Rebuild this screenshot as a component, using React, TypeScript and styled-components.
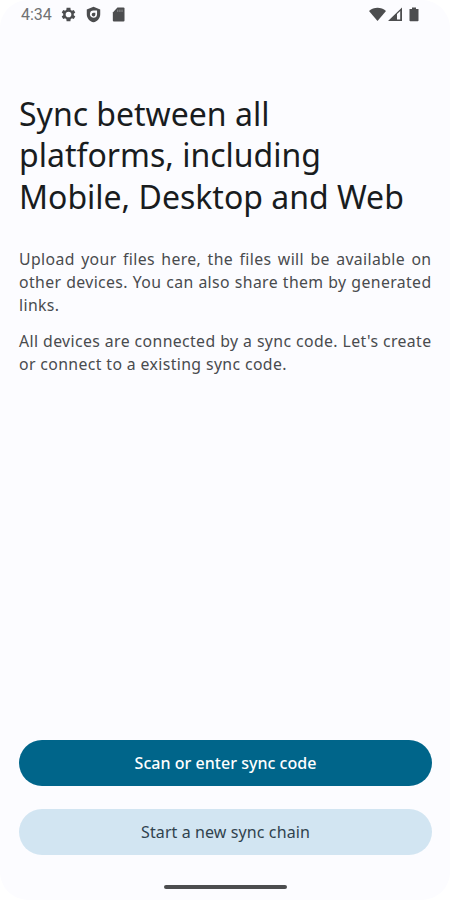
import React from "react";
import styled, { createGlobalStyle } from "styled-components";

const colors = {
  background: "#fcfcff",
  text: "#191c1e",
  primary: "#00658a",
  onPrimary: "#ffffff",
  secondary: "#d2e5f2",
  onSecondary: "#30424e",
  system: "#4c4d4f",
};

interface ActionButtonProps {
  $primary?: boolean;
}

const StatusIcons = () => (
  <IconGroup>
    <svg width="17" height="17" viewBox="0 0 24 24" fill={colors.system}>
      <path
        fillRule="evenodd"
        d="M19.4 13a7.500 7.500 0 0 0 0-2l2.200-1.700-2.200-3.800-2.600 1.100a7.500 7.500 0 0 0-1.700-1L14.700 2.500H9.300l-.4 3.100a7.500 7.500 0 0 0-1.700 1L4.600 5.500 2.400 9.300 4.600 11a7.500 7.500 0 0 0 0 2l-2.200 1.700 2.200 3.800 2.600-1.100a7.500 7.500 0 0 0 1.700 1l.4 3.100h5.400l.4-3.100a7.500 7.500 0 0 0 1.700-1l2.600 1.100 2.200-3.800zM12 16a4 4 0 1 1 0-8 4 4 0 0 1 0 8z"
      />
    </svg>
    <svg width="17" height="17" viewBox="0 0 24 24" fill={colors.system}>
      <path
        fillRule="evenodd"
        d="M12 1 2.500 5v6.500c0 5.400 4 10.200 9.500 11.500 5.500-1.300 9.500-6.100 9.500-11.500V5zM12 6.500h5V12a5 5 0 1 1-5-5.500z"
      />
      <path d="M12 9.500h2.600v2.800a2.600 2.600 0 1 1-2.600-2.800z" />
    </svg>
    <svg width="17" height="17" viewBox="0 0 24 24" fill={colors.system}>
      <path d="M10.500 2H19a1.500 1.500 0 0 1 1.500 1.500v17A1.500 1.500 0 0 1 19 22H5.500A1.500 1.500 0 0 1 4 20.500V9z" />
      <path d="M11 5v3.500M14 5v3.500M17 5v3.500" stroke="#8b8c8e" strokeWidth="1.400" />
    </svg>
  </IconGroup>
);

const SignalIcons = () => (
  <svg width="52" height="16" viewBox="0 0 52 16" fill={colors.system}>
    <path d="M0 4C5-.2 12-.2 17 4L8.500 14z" />
    <path d="M33 .5V14H19zM28 7v5.500h3.200V3.900z" fillRule="evenodd" />
    <path d="M43 .5h4V2h2.500v11.500a.8.8 0 0 1-.8.8h-7.400a.8.8 0 0 1-.8-.8V2H43z" />
  </svg>
);

const App = () => {
  return (
    <>
      <GlobalStyle />
      <Screen>
        <StatusBar>
          <StatusGroup>
            <Clock>4:34</Clock>
            <StatusIcons />
          </StatusGroup>
          <SignalIcons />
        </StatusBar>
        <Content>
          <Title>Sync between all platforms, including Mobile, Desktop and Web</Title>
          <Description>
            <Paragraph>
              Upload your files here, the files will be available on other
              devices. You can also share them by generated links.
            </Paragraph>
            <Paragraph>
              All devices are connected by a sync code. Let's create or connect
              to a existing sync code.
            </Paragraph>
          </Description>
        </Content>
        <Actions>
          <ActionButton $primary>Scan or enter sync code</ActionButton>
          <ActionButton>Start a new sync chain</ActionButton>
        </Actions>
        <HomeIndicator />
      </Screen>
    </>
  );
};

const GlobalStyle = createGlobalStyle`
  * {
    box-sizing: border-box;
  }

  body {
    margin: 0;
    background: #ffffff;
    font-family: "Noto Sans", sans-serif;
  }
`;

const Screen = styled.main`
  display: flex;
  flex-direction: column;
  width: 450px;
  height: 900px;
  overflow: hidden;
  border-radius: 28px;
  background: ${colors.background};
`;

const StatusBar = styled.header`
  display: flex;
  justify-content: space-between;
  align-items: center;
  height: 30px;
  padding: 0 29px 0 21px;
`;

const StatusGroup = styled.div`
  display: flex;
  align-items: center;
  gap: 8px;
`;

const Clock = styled.span`
  font-family: Roboto, sans-serif;
  font-size: 16px;
  line-height: 18px;
  color: #707173;
`;

const IconGroup = styled.div`
  display: flex;
  gap: 8.300px;
  margin-bottom: 1px;
`;

const Content = styled.section`
  flex: 1;
  padding: 63px 18.500px 0 19px;
`;

const Title = styled.h1`
  margin: 0;
  font-size: 32px;
  font-weight: 400;
  line-height: 41.300px;
  color: ${colors.text};
`;

const Description = styled.div`
  display: flex;
  flex-direction: column;
  gap: 13.500px;
  margin-top: 31px;
`;

const Paragraph = styled.p`
  margin: 0;
  font-size: 15.800px;
  line-height: 23px;
  letter-spacing: 0.380px;
  text-align: justify;
  color: #494b4e;
`;

const Actions = styled.div`
  display: flex;
  flex-direction: column;
  gap: 23.500px;
  padding: 0 18px 0 19px;
`;

const ActionButton = styled.button<ActionButtonProps>`
  height: 45.500px;
  padding: 0;
  border: 0;
  border-radius: 23px;
  font-family: inherit;
  font-size: 16px;
  font-weight: ${(props) => (props.$primary ? 500 : 400)};
  letter-spacing: ${(props) => (props.$primary ? "0.030px" : "0.100px")};
  background: ${(props) => (props.$primary ? colors.primary : colors.secondary)};
  color: ${(props) => (props.$primary ? colors.onPrimary : colors.onSecondary)};
  cursor: pointer;
`;

const HomeIndicator = styled.div`
  align-self: center;
  width: 123px;
  height: 4px;
  margin: 30px 0 11.500px;
  border-radius: 2px;
  background: ${colors.system};
`;

export default App;
